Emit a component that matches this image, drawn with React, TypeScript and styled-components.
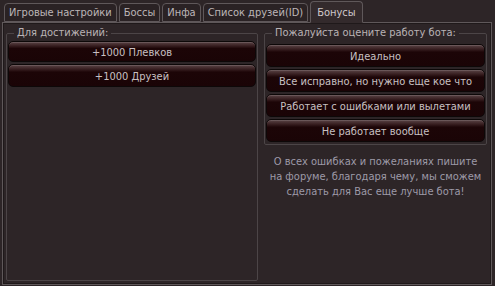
import React from "react";
import styled, {createGlobalStyle} from "styled-components";

const GlobalStyle = createGlobalStyle`
    html, body {
        margin: 0;
        padding: 0;
        background: #2d2527;
    }
    body {
        font-family: "DejaVu Sans Condensed", "Liberation Sans", Arial, sans-serif;
        font-size: 11px;
        color: #c4bcbe;
    }
`;

const Window = styled.div`
    width: 495px;
    height: 286px;
    box-sizing: border-box;
    padding: 0 3px 1px 2px;
    display: flex;
    flex-direction: column;
    background: #2d2527;
`;

const TabBar = styled.div`
    display: flex;
    align-items: flex-end;
    height: 22px;
    padding-left: 2px;
    gap: 2px;
    position: relative;
    z-index: 1;
`;

const Tab = styled.div<{active?: boolean}>`
    height: ${({active}) => active ? "22px" : "19px"};
    box-sizing: border-box;
    padding: 0 ${({active}) => active ? "6px" : "4px"};
    display: flex;
    align-items: center;
    border: 1px solid #5f585a;
    border-bottom: ${({active}) => active ? "1px solid #332a2c" : "1px solid #5f585a"};
    border-radius: 4px 4px 0 0;
    background: ${({active}) => active ? "#332a2c" : "#2a2224"};
    color: ${({active}) => active ? "#cfc8ca" : "#bdb6b8"};
    margin-bottom: ${({active}) => active ? "-1px" : "0"};
    white-space: nowrap;
`;

const Panel = styled.div`
    flex: 1;
    border: 1px solid #5f585a;
    box-shadow: inset 0 0 0 1px #1f191a;
    padding: 4px 4px 3px 3px;
    display: flex;
    gap: 6px;
`;

const Group = styled.fieldset<{width: number; fill?: boolean; top?: number}>`
    width: ${({width}) => width}px;
    box-sizing: border-box;
    margin: 0;
    padding: ${({top}) => top || 2}px 1px 2px;
    border: 1px solid #4c4547;
    border-radius: 2px;
    display: flex;
    flex-direction: column;
    gap: 2px;
    align-self: ${({fill}) => fill ? "stretch" : "flex-start"};
`;

const Legend = styled.legend`
    margin-left: 6px;
    padding: 0 3px;
    color: #bab3b5;
    line-height: 12px;
`;

const Column = styled.div`
    display: flex;
    flex-direction: column;
`;

const Button = styled.div<{h?: number}>`
    height: ${({h}) => h || 23}px;
    box-sizing: border-box;
    border: 1px solid #0d0808;
    border-radius: 5px;
    background: linear-gradient(to bottom, #5a4446 0%, #3b2224 18%, #1c0507 34%, #1a0406 100%);
    box-shadow: inset 0 1px 0 rgba(255, 255, 255, 0.12);
    display: flex;
    align-items: center;
    justify-content: center;
    color: #c8c0c2;
    white-space: nowrap;
    padding-top: 1px;
`;

const Note = styled.p`
    margin: 9px 0 0;
    text-align: center;
    color: #9d9aa8;
    line-height: 15px;
`;

const App = () => {
    const tabs = ["Игровые настройки", "Боссы", "Инфа", "Список друзей(ID)", "Бонусы"];
    const votes = [
        "Идеально",
        "Все исправно, но нужно еще кое что",
        "Работает с ошибками или вылетами",
        "Не работает вообще",
    ];

    return (
        <>
            <GlobalStyle/>
            <Window>
                <TabBar>
                    {tabs.map(tab => <Tab key={tab} active={tab === "Бонусы"}>{tab}</Tab>)}
                </TabBar>
                <Panel>
                    <Group width={252} fill>
                        <Legend>Для достижений:</Legend>
                        <Button h={21}>+1000 Плевков</Button>
                        <Button>+1000 Друзей</Button>
                    </Group>
                    <Column>
                        <Group width={223} top={5}>
                            <Legend>Пожалуйста оцените работу бота:</Legend>
                            {votes.map(v => <Button key={v}>{v}</Button>)}
                        </Group>
                        <Note>
                            О всех ошибках и пожеланиях пишите<br/>
                            на форуме, благодаря чему, мы сможем<br/>
                            сделать для Вас еще лучше бота!
                        </Note>
                    </Column>
                </Panel>
            </Window>
        </>
    );
};

export default App;
